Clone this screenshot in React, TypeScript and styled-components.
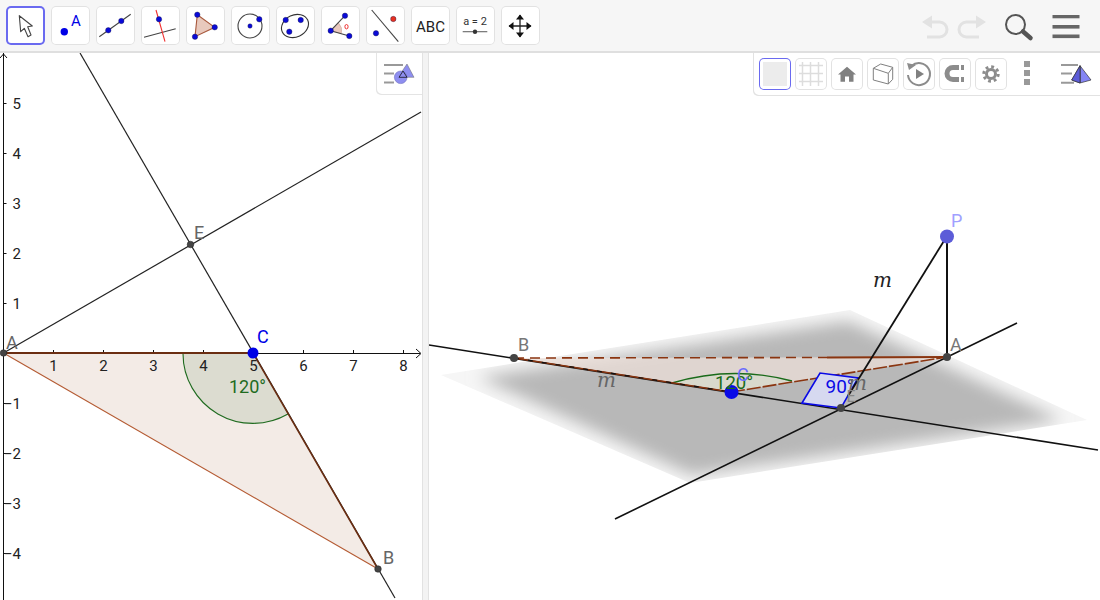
import React from "react";
import styled, { createGlobalStyle } from "styled-components";

const Global = createGlobalStyle`
  html, body { margin: 0; padding: 0; background: #fff; overflow: hidden; }
  body { font-family: "Roboto", "Liberation Sans", sans-serif; }
`;

const Page = styled.div`
  width: 1100px;
  height: 600px;
  display: flex;
  flex-direction: column;
  overflow: hidden;
  background: #fff;
`;

const Toolbar = styled.header`
  flex: 0 0 53px;
  box-sizing: border-box;
  display: flex;
  align-items: flex-start;
  justify-content: space-between;
  padding: 6px 0 0 6px;
  background: #f6f6f6;
  border-bottom: 2px solid #dfdfdf;
`;

const ToolGroup = styled.div`
  display: flex;
  gap: 6px;
`;

const ToolButton = styled.button<{ $active?: boolean }>`
  width: 39px;
  height: 39px;
  padding: 0;
  border: 0;
  display: block;
  background: #fff;
  border-radius: 5px;
  box-shadow: inset 0 0 0 ${(p) => (p.$active ? "2px #6a6af0" : "1px #e2e2e2")};
`;

const ToolIcon = styled.svg`
  display: block;
  width: 39px;
  height: 39px;
`;

const ActionGroup = styled.div`
  width: 180px;
  height: 45px;
  flex: 0 0 auto;
`;

const ActionIcon = styled.svg`
  display: block;
  width: 180px;
  height: 45px;
`;

const Workspace = styled.main`
  flex: 1;
  display: flex;
  min-height: 0;
`;

const GraphicsPanel = styled.section`
  flex: 0 0 422px;
  position: relative;
  overflow: hidden;
`;

const Divider = styled.div`
  flex: 0 0 7px;
  box-sizing: border-box;
  background: #f3f3f3;
  border-left: 1px solid #e2e2e2;
  border-right: 1px solid #e2e2e2;
`;

const ViewPanel = styled.section`
  flex: 1;
  position: relative;
  overflow: hidden;
`;

const Canvas = styled.svg`
  display: block;
  width: 100%;
  height: 100%;
`;

const CornerBar = styled.div`
  position: absolute;
  top: 0;
  right: 0;
  width: 46px;
  height: 42px;
  background: #fff;
  border-radius: 0 0 0 5px;
  box-shadow: inset 1px -1px 0 #e4e4e4;
`;

const CornerIcon = styled.svg`
  display: block;
  width: 46px;
  height: 42px;
`;

const StyleBar = styled.div`
  position: absolute;
  top: 0;
  right: 0;
  width: 347px;
  height: 43px;
  box-sizing: border-box;
  padding: 5px 0 0 6px;
  display: flex;
  gap: 4px;
  background: #fff;
  border-radius: 0 0 0 5px;
  box-shadow: inset 1px -1px 0 #e2e2e2;
`;

const StyleButton = styled.button<{ $active?: boolean }>`
  flex: 0 0 32px;
  width: 32px;
  height: 32px;
  padding: 0;
  border: 0;
  background: #fff;
  border-radius: 5px;
  box-shadow: inset 0 0 0 1px ${(p) => (p.$active ? "#6a6af0" : "#e2e2e2")};
`;

const StyleIcon = styled.svg`
  display: block;
  width: 32px;
  height: 32px;
`;

const MenuDots = styled.div`
  flex: 0 0 6px;
  margin: 3px 0 0 13px;
  display: flex;
  flex-direction: column;
  gap: 3px;
`;

const Dot = styled.span`
  display: block;
  width: 6px;
  height: 6px;
  background: #999;
`;

const PyramidIcon = styled.svg`
  display: block;
  flex: 0 0 40px;
  width: 40px;
  height: 32px;
  margin-left: 24px;
`;

const BLUE = "#0000e6";
const P = ({ x, y, r = 2.7, c = "#0a0ad8" }: { x: number; y: number; r?: number; c?: string }) => (
  <circle cx={x} cy={y} r={r} fill={c} stroke="#1a1a4a" strokeWidth={0.4} />
);

const tools: React.ReactNode[] = [
  <path d="M13.3 9.7 L14.7 25.7 L18.3 22.3 L22 30.7 L25 29 L21.7 20.7 L26.3 20 Z" fill="#fff" stroke="#444" strokeWidth={1.1} strokeLinejoin="round" />,
  <>
    <circle cx={13.3} cy={25.7} r={3.7} fill={BLUE} />
    <text x={25} y={19.5} fontSize={15} fill={BLUE} textAnchor="middle" fontFamily="Roboto">A</text>
  </>,
  <>
    <line x1={3.3} y1={30.7} x2={34.7} y2={8.3} stroke="#444" strokeWidth={1.1} />
    <P x={12.3} y={24.3} />
    <P x={25.3} y={15} />
  </>,
  <>
    <line x1={3} y1={31.3} x2={34.7} y2={22.7} stroke="#444" strokeWidth={1.1} />
    <line x1={15} y1={4} x2={24} y2={35.7} stroke="#f03030" strokeWidth={1.1} />
    <P x={18} y={13.3} />
  </>,
  <>
    <polygon points="11.3,8.7 28.7,21.3 9,30.7" fill="#e8c9bd" stroke="#a8583c" strokeWidth={1.1} />
    <P x={11.3} y={8.7} />
    <P x={28.7} y={21.3} />
    <P x={9} y={30.7} />
  </>,
  <>
    <circle cx={19} cy={20} r={12} fill="none" stroke="#444" strokeWidth={1.1} />
    <P x={19} y={20} r={2.2} />
    <P x={28.3} y={13.3} />
  </>,
  <>
    <ellipse cx={19} cy={20} rx={14} ry={11} transform="rotate(-25 19 20)" fill="none" stroke="#333" strokeWidth={1.1} />
    <P x={9.7} y={14} />
    <P x={24.7} y={14} />
    <P x={13.3} y={25.7} />
  </>,
  <>
    <path d="M9.7 24.7 L17.5 17 A11 11 0 0 1 20.3 27.5 Z" fill="#eac9be" stroke="#c9a091" strokeWidth={0.6} />
    <line x1={9.7} y1={24.7} x2={24} y2={9.7} stroke="#444" strokeWidth={1.1} />
    <line x1={9.7} y1={24.7} x2={28.3} y2={30} stroke="#444" strokeWidth={1.1} />
    <P x={9.7} y={24.7} />
    <P x={24} y={9.7} />
    <P x={28.3} y={30} />
    <ellipse cx={25.5} cy={20.7} rx={1.6} ry={2.2} fill="none" stroke="#f03030" strokeWidth={1} />
  </>,
  <>
    <line x1={5.7} y1={4} x2={32.3} y2={35.7} stroke="#444" strokeWidth={1.1} />
    <P x={10} y={27.3} />
    <P x={27.3} y={13} c="#e83020" />
  </>,
  <text x={19.5} y={25.5} fontSize={15} fill="#222" textAnchor="middle" fontFamily="Roboto">ABC</text>,
  <>
    <text x={19} y={19} fontSize={11} fill="#333" textAnchor="middle" fontFamily="Roboto">a = 2</text>
    <line x1={6.7} y1={25.7} x2={31.3} y2={25.7} stroke="#666" strokeWidth={1.1} />
    <circle cx={19} cy={25.7} r={2.2} fill="#333" />
  </>,
  <>
    <path d="M8 20 H30 M19 9 V31" stroke="#222" strokeWidth={1.3} />
    <path d="M19 8.5 L15 13.5 H23 Z M19 31.5 L15 26.5 H23 Z M7.5 20 L12.5 16 V24 Z M30.5 20 L25.5 16 V24 Z" fill="#111" />
  </>,
];

const styleIcons: React.ReactNode[] = [
  <rect x={4} y={4} width={24} height={24} fill="#ececec" />,
  <path d="M7.5 4 V28 M15.5 4 V28 M23.5 4 V28 M4 7.5 H28 M4 15.5 H28 M4 23.5 H28" stroke="#ddd" strokeWidth={1.5} fill="none" />,
  <path d="M16 8.7 L25 16.5 H22.5 V23.7 H18 V18.5 H14 V23.7 H9.5 V16.5 H7 Z" fill="#808080" />,
  <g fill="none" stroke="#808080" strokeWidth={1} strokeLinejoin="round">
    <path d="M6.3 10.3 L21.3 15.3 V26 L6.3 22 Z" />
    <path d="M6.3 10.3 L13.7 6 L25.7 9.3 L21.3 15.3" />
    <path d="M25.7 9.3 V21.3 L21.3 26" />
  </g>,
  <g>
    <path d="M8.5 8 A11 11 0 1 1 5 17" fill="none" stroke="#8c8c8c" strokeWidth={2} />
    <path d="M4 5 L13 7 L6 12 Z" fill="#8c8c8c" />
    <path d="M13 11 L21 16 L13 21 Z" fill="#808080" />
  </g>,
  <g fill="#8c8c8c">
    <path d="M20 9.5 H14 A6 6 0 0 0 14 21.5 H20" fill="none" stroke="#8c8c8c" strokeWidth={5} />
    <rect x={22} y={7} width={3} height={5} />
    <rect x={22} y={19} width={3} height={5} />
  </g>,
  <g fill="none" stroke="#8c8c8c">
    <circle cx={16} cy={16} r={4.5} strokeWidth={3} />
    <circle cx={16} cy={16} r={7.2} strokeWidth={3} strokeDasharray="2.8 2.85" />
  </g>,
];

export default function App() {
  const axisX = [1, 2, 3, 4, 5, 6, 7, 8];
  const axisY = [5, 4, 3, 2, 1, -1, -2, -3, -4];
  return (
    <Page>
      <Global />
      <Toolbar>
        <ToolGroup>
          {tools.map((t, i) => (
            <ToolButton key={i} $active={i === 0}>
              <ToolIcon viewBox="0 0 39 39">{t}</ToolIcon>
            </ToolButton>
          ))}
        </ToolGroup>
        <ActionGroup>
          <ActionIcon viewBox="920 6 180 45">
            <g fill="none" stroke="#e2e2e2" strokeWidth={3}>
              <path d="M929 22 H939.5 A7.5 7.5 0 0 1 939.5 37 H927" />
              <path d="M979 22 H966.5 A7.5 7.5 0 0 0 966.5 37 H979" />
            </g>
            <path d="M922 22 L932 15.5 V28.5 Z" fill="#e2e2e2" />
            <path d="M986 22 L976 15.5 V28.5 Z" fill="#e2e2e2" />
            <circle cx={1015.5} cy={24.5} r={9.5} fill="none" stroke="#555" strokeWidth={2} />
            <line x1={1023} y1={31.5} x2={1030.5} y2={38} stroke="#555" strokeWidth={4.5} strokeLinecap="round" />
            <rect x={1052.5} y={15} width={27} height={3.3} fill="#666" />
            <rect x={1052.5} y={25} width={27} height={3.6} fill="#666" />
            <rect x={1052.5} y={34.5} width={27} height={3.6} fill="#666" />
          </ActionIcon>
        </ActionGroup>
      </Toolbar>
      <Workspace>
        <GraphicsPanel>
          <Canvas viewBox="0 53 422 547">
            <polygon points="3.5,353 253,353 378,569" fill="#f3ebe6" />
            <path d="M183 353 A70 70 0 0 0 288 414 L253 353 Z" fill="#dcdcd0" />
            <path d="M183 353 A70 70 0 0 0 288 414" fill="none" stroke="#1f6b1f" strokeWidth={1.1} />

            <line x1={3.5} y1={53} x2={3.5} y2={600} stroke="#111" strokeWidth={1} />
            <line x1={3.5} y1={353.5} x2={420} y2={353.5} stroke="#111" strokeWidth={1} />
            <path d="M0 58 L3.5 54 L7 58" fill="none" stroke="#111" strokeWidth={1} />
            <path d="M416 349 L421 353.5 L416 358" fill="none" stroke="#111" strokeWidth={1} />
            {axisX.map((n) => (
              <g key={n}>
                <line x1={3.5 + n * 50} y1={350} x2={3.5 + n * 50} y2={353} stroke="#111" strokeWidth={1} />
                <text x={3.5 + n * 50} y={371} fontSize={15} fill="#222" textAnchor="middle" fontFamily="Roboto">{n}</text>
              </g>
            ))}
            {axisY.map((n) => (
              <g key={n}>
                <line x1={3.5} y1={353.5 - n * 50} x2={6.5} y2={353.5 - n * 50} stroke="#111" strokeWidth={1} />
                <text x={21} y={353.5 - n * 50 + 5.5} fontSize={15} fill="#222" textAnchor="end" fontFamily="Roboto">{n < 0 ? `\u2212${-n}` : n}</text>
              </g>
            ))}

            <line x1={80} y1={53} x2={395} y2={598} stroke="#222" strokeWidth={1.2} />
            <line x1={3.5} y1={353} x2={421} y2={112} stroke="#222" strokeWidth={1.2} />

            <line x1={3.5} y1={353} x2={253} y2={353} stroke="#6b2e12" strokeWidth={2} />
            <line x1={253} y1={353} x2={378} y2={569} stroke="#6b2e12" strokeWidth={1.6} />
            <line x1={3.5} y1={353} x2={378} y2={569} stroke="#b45a32" strokeWidth={1.1} />

            <circle cx={190.5} cy={244.5} r={3.3} fill="#444" stroke="#222" strokeWidth={0.5} />
            <circle cx={3.5} cy={353} r={3.3} fill="#444" stroke="#222" strokeWidth={0.5} />
            <circle cx={378} cy={569} r={3.3} fill="#444" stroke="#222" strokeWidth={0.5} />
            <circle cx={253} cy={353} r={5.5} fill={BLUE} />

            <text x={6} y={349} fontSize={18} fill="#666" fontFamily="Roboto">A</text>
            <text x={194} y={239} fontSize={18} fill="#666" fontFamily="Roboto">E</text>
            <text x={383} y={564} fontSize={18} fill="#666" fontFamily="Roboto">B</text>
            <text x={257} y={343} fontSize={18} fill={BLUE} fontFamily="Roboto">C</text>
            <text x={229} y={393} fontSize={18} fill="#1f6b1f" fontFamily="Roboto">120°</text>
          </Canvas>
          <CornerBar>
            <CornerIcon viewBox="376 53 46 42">
              <path d="M384 65 H403 M384 73.5 H394 M384 82.5 H394" stroke="#999" strokeWidth={2} />
              <polygon points="407,64 414,77.3 398,77.3" fill="#8e8ef0" stroke="#666" strokeWidth={0.5} />
              <circle cx={400.7} cy={77.3} r={6.3} fill="#8e8ef0" stroke="#7070c0" strokeWidth={0.6} />
              <path d="M403 71 L399 77.3 H407 Z" fill="none" stroke="#223" strokeWidth={0.9} />
            </CornerIcon>
          </CornerBar>
        </GraphicsPanel>
        <Divider />
        <ViewPanel>
          <Canvas viewBox="429 53 671 547">
            <defs>
              <clipPath id="planeClip">
                <polygon points="441,375 850,310 1087,420 690,483" />
              </clipPath>
              <filter id="planeBlur" x="-20%" y="-20%" width="140%" height="140%">
                <feGaussianBlur stdDeviation="8" />
              </filter>
            </defs>
            <g clipPath="url(#planeClip)">
              <rect x={430} y={300} width={670} height={200} fill="#f6f6f6" />
              <polygon points="478,377 848,321 1062,420 692,475" fill="#b8b8b8" filter="url(#planeBlur)" />
            </g>

            <polygon points="514,358 947,357 731,392" fill="#ecdfd8" fillOpacity={0.75} />
            <path d="M672 383 Q732 365 792 381 L731 392 Z" fill="#d7d9cc" fillOpacity={0.8} />
            <path d="M672 383 Q732 365 792 381" fill="none" stroke="#1a6b1a" strokeWidth={1.4} />

            <line x1={429} y1={345} x2={1098} y2={450} stroke="#111" strokeWidth={1.6} />
            <line x1={615} y1={519} x2={1017} y2={323} stroke="#111" strokeWidth={1.6} />

            <line x1={514} y1={358} x2={827} y2={357.5} stroke="#8a3510" strokeWidth={1.6} strokeDasharray="10 6" />
            <line x1={827} y1={357.5} x2={947} y2={357} stroke="#8a3510" strokeWidth={1.8} />
            <line x1={514} y1={358} x2={731} y2={392} stroke="#8a3510" strokeWidth={1.6} />
            <line x1={514} y1={358} x2={731} y2={392} stroke="#111" strokeWidth={1.2} strokeDasharray="5 9" />
            <line x1={731} y1={392} x2={947} y2={357} stroke="#8a3510" strokeWidth={1.6} strokeDasharray="14 2" />

            <polygon points="802,403 820,373 858,378 841,408" fill="#d6d9f0" stroke="#0a0ae6" strokeWidth={1.6} />

            <line x1={947} y1={236} x2={947} y2={357} stroke="#111" strokeWidth={2} />
            <line x1={947} y1={236} x2={848} y2={396} stroke="#111" strokeWidth={1.8} />

            <circle cx={514} cy={358} r={4} fill="#444" />
            <circle cx={947} cy={357} r={4} fill="#444" />
            <circle cx={841} cy={408} r={4} fill="#444" />
            <circle cx={731.5} cy={392} r={7} fill="#0a0ae6" />
            <circle cx={947} cy={236.5} r={7} fill="#5c5cd8" />

            <text x={518} y={351} fontSize={18} fill="#777" fontFamily="Roboto">B</text>
            <text x={950} y={351} fontSize={18} fill="#777" fontFamily="Roboto">A</text>
            <text x={951} y={227} fontSize={18} fill="#a0a0ff" fontFamily="Roboto">P</text>
            <text x={846.5} y={402} fontSize={16} fill="#888" fontFamily="Roboto">E</text>
            <text x={715} y={389} fontSize={18.5} fill="#1a6b1a" fontFamily="Roboto">120°</text>
            <text x={737} y={381} fontSize={18} fill="#6a6aff" fontFamily="Roboto">C</text>
            <text x={825.5} y={392.5} fontSize={19} fill="#0a0ae6" fontFamily="Roboto">90°</text>
            <text x={873} y={287} fontSize={20} fill="#222" fontStyle="italic" fontFamily="DejaVu Serif">m</text>
            <text x={597} y={387} fontSize={20} fill="#666" fontStyle="italic" fontFamily="DejaVu Serif">m</text>
            <text x={848} y={390} fontSize={20} fill="#666" fontStyle="italic" fontFamily="DejaVu Serif">m</text>
          </Canvas>
          <StyleBar>
            {styleIcons.map((ic, i) => (
              <StyleButton key={i} $active={i === 0}>
                <StyleIcon viewBox="0 0 32 32">{ic}</StyleIcon>
              </StyleButton>
            ))}
            <MenuDots>
              <Dot />
              <Dot />
              <Dot />
            </MenuDots>
            <PyramidIcon viewBox="1058 58 40 32">
              <path d="M1061 65 H1078 M1061 73.5 H1072 M1061 82.7 H1074" stroke="#999" strokeWidth={2} />
              <polygon points="1080,65.7 1091,80 1080,83 1071.7,80" fill="#8585f5" stroke="#333" strokeWidth={0.7} />
              <line x1={1080} y1={65.7} x2={1080} y2={83} stroke="#333" strokeWidth={1.1} />
              <polygon points="1080,65.7 1071.7,80 1080,83" fill="#5c5cd8" stroke="#333" strokeWidth={0.7} />
            </PyramidIcon>
          </StyleBar>
        </ViewPanel>
      </Workspace>
    </Page>
  );
}
